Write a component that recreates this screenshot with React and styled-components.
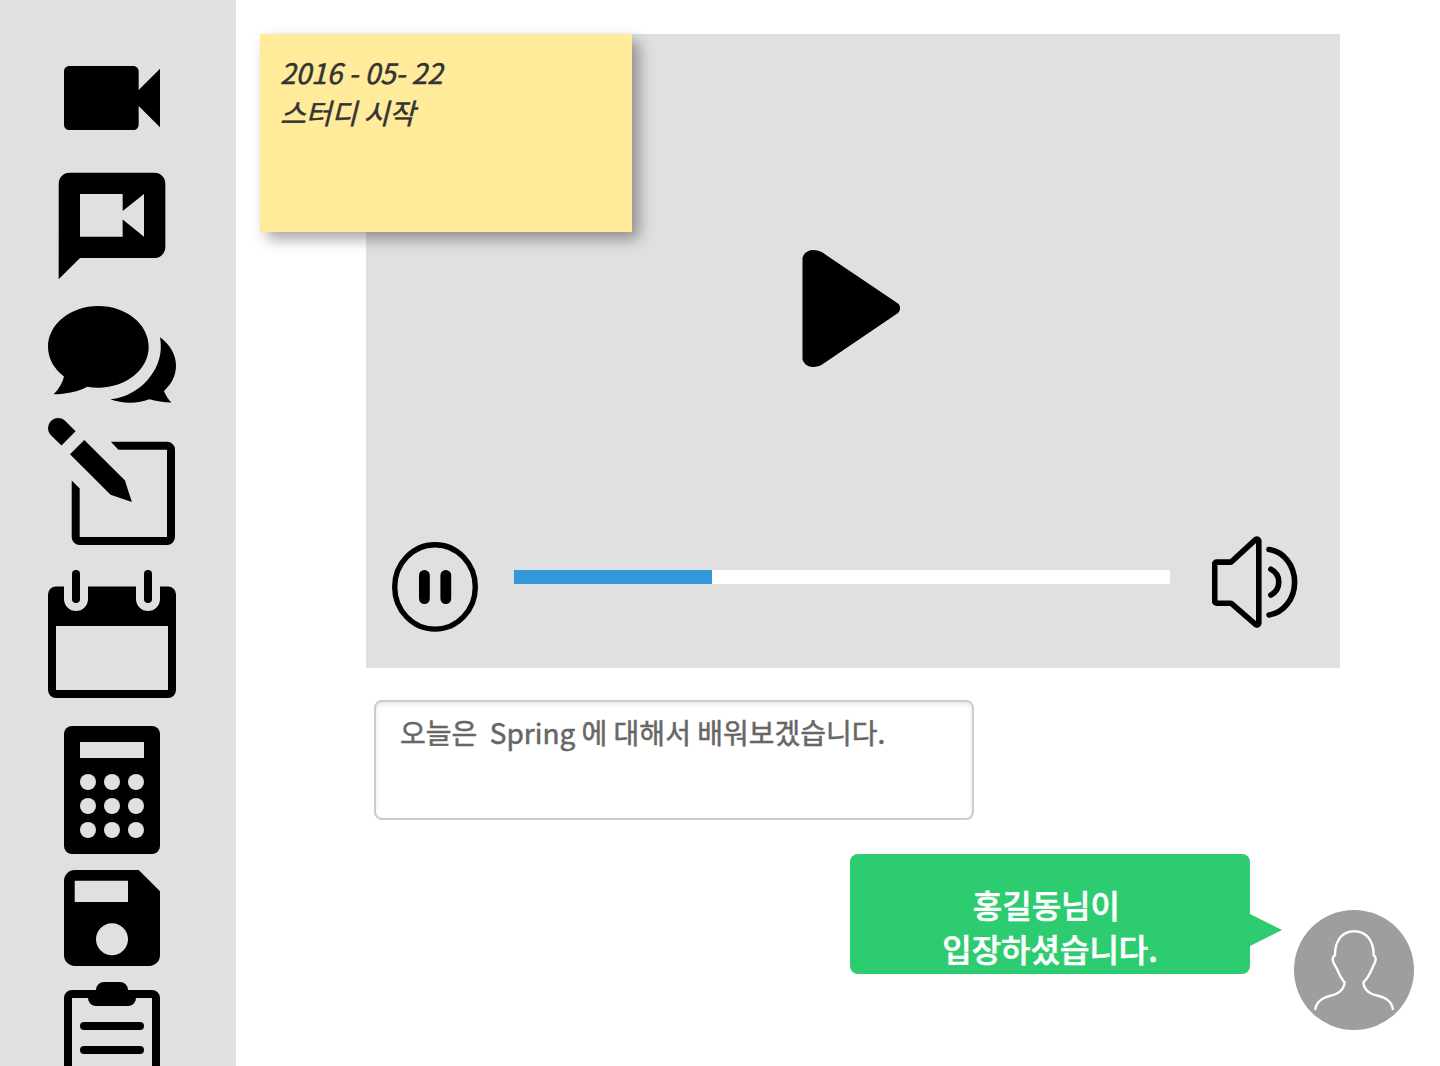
import React from "react";
import styled, { createGlobalStyle } from "styled-components";

const GlobalStyle = createGlobalStyle`
  * { box-sizing: border-box; }
  body {
    margin: 0;
    background: #fff;
    font-family: "Noto Sans CJK KR", "Noto Sans", sans-serif;
  }
`;

const Page = styled.div`
  display: flex;
  width: 1440px;
  height: 1066px;
  overflow: hidden;
`;

const Sidebar = styled.nav`
  display: flex;
  flex-direction: column;
  flex: none;
  width: 236px;
  padding: 34px 0 0 48px;
  background: #e0e0e0;
`;

const ToolIcon = styled.svg`
  display: block;
  flex: none;
  width: 128px;
  height: 128px;
  margin-top: ${({ $gap = 0 }) => $gap}px;
  fill: #000;
`;

const Main = styled.main`
  position: relative;
  flex: 1;
  display: flex;
  flex-direction: column;
  padding: 34px 26px 0 130px;
`;

const Player = styled.section`
  display: flex;
  flex-direction: column;
  width: 974px;
  height: 634px;
  background: #e0e0e0;
`;

const Stage = styled.div`
  flex: 1;
  padding: 216px 0 0 436px;
`;

const PlayIcon = styled.svg`
  display: block;
  width: 98px;
  height: 118px;
`;

const Controls = styled.div`
  display: flex;
  align-items: flex-start;
  height: 132px;
  padding: 0 42px 0 26px;
`;

const PauseIcon = styled.svg`
  flex: none;
  width: 86px;
  height: 90px;
  margin-top: 6px;
`;

const Track = styled.div`
  width: 656px;
  height: 14px;
  margin: 34px 42px 0 36px;
  background: #fff;
`;

const Progress = styled.div`
  width: ${({ $value }) => $value}%;
  height: 100%;
  background: #3498db;
`;

const SpeakerIcon = styled.svg`
  flex: none;
  width: 86px;
  height: 92px;
`;

const StickyNote = styled.aside`
  position: absolute;
  top: 34px;
  left: 24px;
  width: 372px;
  height: 198px;
  padding: 18px 20px;
  background: #ffeb99;
  box-shadow: 7px 7px 14px rgba(0, 0, 0, 0.36);
  color: #333;
  font-size: 28px;
  font-style: italic;
  line-height: 40px;
  -webkit-text-stroke: 0.5px #333;
`;

const MessageBox = styled.div`
  width: 600px;
  height: 120px;
  margin: 32px 0 0 8px;
  padding: 10px 24px;
  border: 2px solid #ccc;
  border-radius: 8px;
  background: #fff;
  box-shadow: inset 0 2px 4px rgba(0, 0, 0, 0.1);
  color: #666;
  font-size: 28px;
  line-height: 40px;
  white-space: pre;
  -webkit-text-stroke: 0.5px #666;
`;

const Notice = styled.div`
  display: flex;
  justify-content: flex-end;
  align-items: flex-start;
  margin-top: 34px;
`;

const Bubble = styled.div`
  position: relative;
  width: 400px;
  height: 120px;
  margin-right: 44px;
  padding: 28px 0 0;
  border-radius: 8px;
  background: #2ecc71;
  color: #fff;
  font-size: 32px;
  font-weight: 500;
  line-height: 44px;
  text-align: center;
  -webkit-text-stroke: 0.6px #fff;

  &::after {
    content: "";
    position: absolute;
    top: 60px;
    left: 100%;
    border-left: 32px solid #2ecc71;
    border-top: 16px solid transparent;
    border-bottom: 16px solid transparent;
  }
`;

const Avatar = styled.svg`
  flex: none;
  width: 120px;
  height: 120px;
  margin-top: 56px;
`;

function Tools() {
  return (
    <Sidebar>
      <ToolIcon viewBox="0 0 24 24">
        <path d="M17 10.5V7c0-.55-.45-1-1-1H4c-.55 0-1 .45-1 1v10c0 .55.45 1 1 1h12c.55 0 1-.45 1-1v-3.5l4 4v-11l-4 4z" />
      </ToolIcon>
      <ToolIcon viewBox="0 0 24 24">
        <path d="M20 2H4c-1.1 0-1.99.9-1.99 2L2 22l4-4h14c1.1 0 2-.9 2-2V4c0-1.1-.9-2-2-2zm-2 12l-4-3.2V14H6V6h8v3.2L18 6v8z" />
      </ToolIcon>
      <ToolIcon viewBox="0 0 128 128">
        <path d="M50.3 16C22.5 16 0 34.2 0 56.8C0 68.4 6 79 16 86.5C14.5 93 11 99 5.6 104.3C19 104 30 101.5 39.3 96.7C43 97.4 46.5 97.7 50.3 97.7C78.2 97.7 100.7 79.5 100.7 56.8C100.7 34.2 78.2 16 50.3 16z" />
        <path d="M112 47.3C122 54.5 128 64.5 128 75.8C128 85.5 123.5 94.5 116 100.9C117.5 105 120 109 123.5 112.5C115.5 112.2 108 111.2 101.3 109.2C95.5 111.5 89 112.7 82 112.7C75 112.7 68.5 111.5 62.3 109.3C78 107.5 90.5 100.5 100 89.5C111.5 76 114.5 62 112 47.3z" />
      </ToolIcon>
      <ToolIcon viewBox="0 0 128 128">
        <path d="M13.5 27.6L3.2 17.4A10.4 10.4 0 0 1 0 10A10 10 0 0 1 10 0A10.4 10.4 0 0 1 17.5 3.2L27.6 13.2z" />
        <path d="M36.3 22L76.8 62.3L83.9 84L62.6 76.7L22 36.3z" />
        <path d="M62.8 23.7H119a8 8 0 0 1 8 8V119a8 8 0 0 1-8 8H31.7a8 8 0 0 1-8-8V62.6L31.7 70.4V119H119V31.7H70.5z" />
      </ToolIcon>
      <ToolIcon viewBox="0 0 128 128" $gap={24}>
        <path
          fillRule="evenodd"
          d="M8 16.5H16V29a12 12 0 0 0 24 0V16.5H88V29a12 12 0 0 0 24 0V16.5H120a8 8 0 0 1 8 8V120a8 8 0 0 1-8 8H8a8 8 0 0 1-8-8V24.5a8 8 0 0 1 8-8zM8 56V120H120V56z"
        />
        <rect x="24" y="0" width="8" height="33" rx="4" />
        <rect x="96" y="0" width="8" height="33" rx="4" />
      </ToolIcon>
      <ToolIcon viewBox="0 0 128 128" $gap={28}>
        <rect x="16" y="0" width="96" height="128" rx="8" />
        <g fill="#e0e0e0">
          <rect x="32" y="16" width="64" height="16" />
          {[56, 80, 104].map((cy) =>
            [40, 64, 88].map((cx) => <circle key={`${cx}-${cy}`} cx={cx} cy={cy} r="8" />)
          )}
        </g>
      </ToolIcon>
      <ToolIcon viewBox="0 0 128 128">
        <path
          fillRule="evenodd"
          d="M26.7 16H90.7L112 37.3V101.3A10.7 10.7 0 0 1 101.3 112H26.7A10.7 10.7 0 0 1 16 101.3V26.7A10.7 10.7 0 0 1 26.7 16zM26.7 26.7V48H80V26.7zM64 69.3a16 16 0 1 0 0 32a16 16 0 1 0 0-32z"
        />
      </ToolIcon>
      <ToolIcon viewBox="0 0 128 128">
        <path
          fillRule="evenodd"
          d="M24 8H104a8 8 0 0 1 8 8V120a8 8 0 0 1-8 8H24a8 8 0 0 1-8-8V16a8 8 0 0 1 8-8zM24 16V120H104V16z"
        />
        <path d="M48 8a8 8 0 0 1 8-8H72a8 8 0 0 1 8 8H88V16a8 8 0 0 1-8 8H48a8 8 0 0 1-8-8V8z" />
        <rect x="32" y="40" width="64" height="8" rx="4" />
        <rect x="32" y="64" width="64" height="8" rx="4" />
      </ToolIcon>
    </Sidebar>
  );
}

function VideoPlayer() {
  return (
    <Player>
      <Stage>
        <PlayIcon viewBox="0 0 98 118">
          <path d="M.5 7.5C2 3 6 0 11 0C14.5 0 18 .9 20.5 2.6L96 53.5C98.7 55.8 98.7 60.7 96 63L20.5 114.3C18 116 14.5 116.9 11 116.9C6 116.9 2 114 .5 109.4z" />
        </PlayIcon>
      </Stage>
      <Controls>
        <PauseIcon viewBox="0 0 86 90">
          <ellipse cx="43" cy="44.9" rx="40.3" ry="42.2" fill="none" stroke="#000" strokeWidth="5.4" />
          <rect x="27" y="28" width="10.8" height="34" rx="5.4" />
          <rect x="48.4" y="28" width="10.8" height="34" rx="5.4" />
        </PauseIcon>
        <Track>
          <Progress $value={30.2} />
        </Track>
        <SpeakerIcon
          viewBox="0 0 86 92"
          fill="none"
          stroke="#000"
          strokeWidth="5.6"
          strokeLinecap="round"
          strokeLinejoin="round"
        >
          <path d="M4.7 26.1H18.3a2 2 0 0 0 1.3-.5L43.8 3.4a2 2 0 0 1 3 1.5V87.2a2 2 0 0 1-3 1.5L19.6 67.7a2 2 0 0 0-1.3-.5H4.7a2 2 0 0 1-2-2V28.1a2 2 0 0 1 2-2z" />
          <path d="M58.9 33.2C69.4 38.5 69.4 53.5 58.9 59" />
          <path d="M57 13.5C71.5 15.5 82.6 29.5 82.6 46.2S71.5 76.9 57 78.9" />
        </SpeakerIcon>
      </Controls>
    </Player>
  );
}

export default function App() {
  return (
    <Page>
      <GlobalStyle />
      <Tools />
      <Main>
        <VideoPlayer />
        <StickyNote>
          2016 - 05- 22
          <br />
          스터디 시작
        </StickyNote>
        <MessageBox>{"오늘은  Spring 에 대해서 배워보겠습니다."}</MessageBox>
        <Notice>
          <Bubble>
            홍길동님이&nbsp;
            <br />
            입장하셨습니다.
          </Bubble>
          <Avatar viewBox="0 0 120 120">
            <circle cx="60" cy="60" r="60" fill="#9e9e9e" />
            <path
              fill="none"
              stroke="#fff"
              strokeWidth="2.4"
              strokeLinecap="round"
              strokeLinejoin="round"
              d="M21.3 99C22 94 25 90.5 30 88C34.5 85.8 38.5 85.5 42 84C47 81.8 50.5 77 50.7 72.5C46.5 68 44.5 62 42.7 58.5C41 55.5 38.7 52 38.7 49.5Q38.7 46.5 40.9 45.5C41 30 48.5 21.2 60.2 21.2S79.6 30 79.7 45.5Q81.7 46.5 81.7 49.5C81.5 52 79.5 55.5 78.2 58.5C76 63.5 73.5 68.5 69.3 72.5C69.8 77 73 81.8 78 84C81.5 85.5 86 85.8 90.5 88C95.5 90.5 98.2 94 98.9 99"
            />
          </Avatar>
        </Notice>
      </Main>
    </Page>
  );
}
